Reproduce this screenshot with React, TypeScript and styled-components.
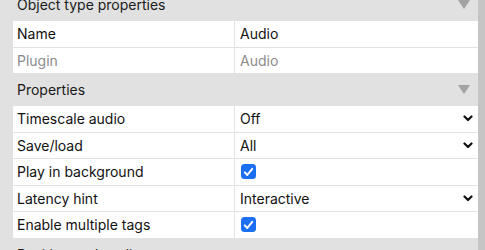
import { createGlobalStyle, styled } from "styled-components";

const GlobalStyle = createGlobalStyle`
	html, body {
		margin: 0;
		padding: 0;
		background: #e1e1e1;
	}
	body {
		font-family: Inter, "Liberation Sans", sans-serif;
		font-size: 14px;
		color: #111;
	}
`;

const Frame = styled.div`
	display: flex;
	width: 485px;
	height: 250px;
	overflow: hidden;
	background: #e1e1e1;
`;

const Content = styled.div`
	flex: 1;
	overflow: hidden;
`;

/* scrolled down a little, so the first header is partly hidden */
const Scrolled = styled.div`
	margin-top: -12px;
`;

const ScrollBar = styled.div`
	width: 7px;
	flex-shrink: 0;
	background: #c5c5c5;
`;

const SectionHeader = styled.div`
	display: flex;
	align-items: center;
	justify-content: space-between;
	height: 33px;
	padding: 0 8px 0 17px;
`;

const SectionTitle = styled.span`
	color: #1a1a1a;
`;

const Triangle = styled.span`
	width: 0;
	height: 0;
	border-left: 6.5px solid transparent;
	border-right: 6.5px solid transparent;
	border-top: 9px solid #a3a3a3;
`;

const Table = styled.div`
	margin-left: 13px;
	background: #fff;
`;

const Row = styled.div`
	display: grid;
	grid-template-columns: 221px 1fr;
	height: 25.5px;
	border-bottom: 1px solid #e2e2e2;
	&:last-child {
		border-bottom: 0;
	}
`;

const Cell = styled.div<{ $muted?: boolean }>`
	display: flex;
	align-items: center;
	padding-left: 4px;
	color: ${(p) => (p.$muted ? "#8c8c8c" : "#111")};
	white-space: nowrap;
`;

const ValueCell = styled(Cell)`
	border-left: 1px solid #e2e2e2;
	padding-left: 5px;
	padding-right: 5px;
	justify-content: space-between;
`;

const Check = styled.span`
	display: flex;
	align-items: center;
	justify-content: center;
	width: 15px;
	height: 15px;
	border-radius: 3.5px;
	background: #1a6ff3;
	margin-left: 1px;
`;

function Chevron() {
	return (
		<svg width="10" height="7" viewBox="0 0 10 7">
			<path d="M1.5 1.5 L5 5 L8.5 1.5" stroke="#111" strokeWidth="2.2" fill="none" strokeLinecap="round" strokeLinejoin="round" />
		</svg>
	);
}

function Tick() {
	return (
		<Check>
			<svg width="11" height="10" viewBox="0 0 11 10">
				<path d="M1.8 5.4 L4.3 8 L9.2 1.8" stroke="#fff" strokeWidth="2" fill="none" strokeLinecap="round" strokeLinejoin="round" />
			</svg>
		</Check>
	);
}

type Prop = { name: string; value?: string; kind: "text" | "select" | "check"; muted?: boolean };

const objectProps: Prop[] = [
	{ name: "Name", value: "Audio", kind: "text" },
	{ name: "Plugin", value: "Audio", kind: "text", muted: true },
];

const properties: Prop[] = [
	{ name: "Timescale audio", value: "Off", kind: "select" },
	{ name: "Save/load", value: "All", kind: "select" },
	{ name: "Play in background", kind: "check" },
	{ name: "Latency hint", value: "Interactive", kind: "select" },
	{ name: "Enable multiple tags", kind: "check" },
];

function PropRow({ p }: { p: Prop }) {
	return (
		<Row>
			<Cell $muted={p.muted}>{p.name}</Cell>
			<ValueCell $muted={p.muted}>
				{p.kind === "check" ? <Tick /> : <span>{p.value}</span>}
				{p.kind === "select" && <Chevron />}
			</ValueCell>
		</Row>
	);
}

function Section({ title, rows }: { title: string; rows: Prop[] }) {
	return (
		<>
			<SectionHeader>
				<SectionTitle>{title}</SectionTitle>
				<Triangle />
			</SectionHeader>
			<Table>
				{rows.map((p) => (
					<PropRow key={p.name} p={p} />
				))}
			</Table>
		</>
	);
}

export default function App() {
	return (
		<Frame>
			<GlobalStyle />
			<Content>
				<Scrolled>
					<Section title="Object type properties" rows={objectProps} />
					<Section title="Properties" rows={properties} />
					<Section title="Position and scaling" rows={[]} />
				</Scrolled>
			</Content>
			<ScrollBar />
		</Frame>
	);
}
